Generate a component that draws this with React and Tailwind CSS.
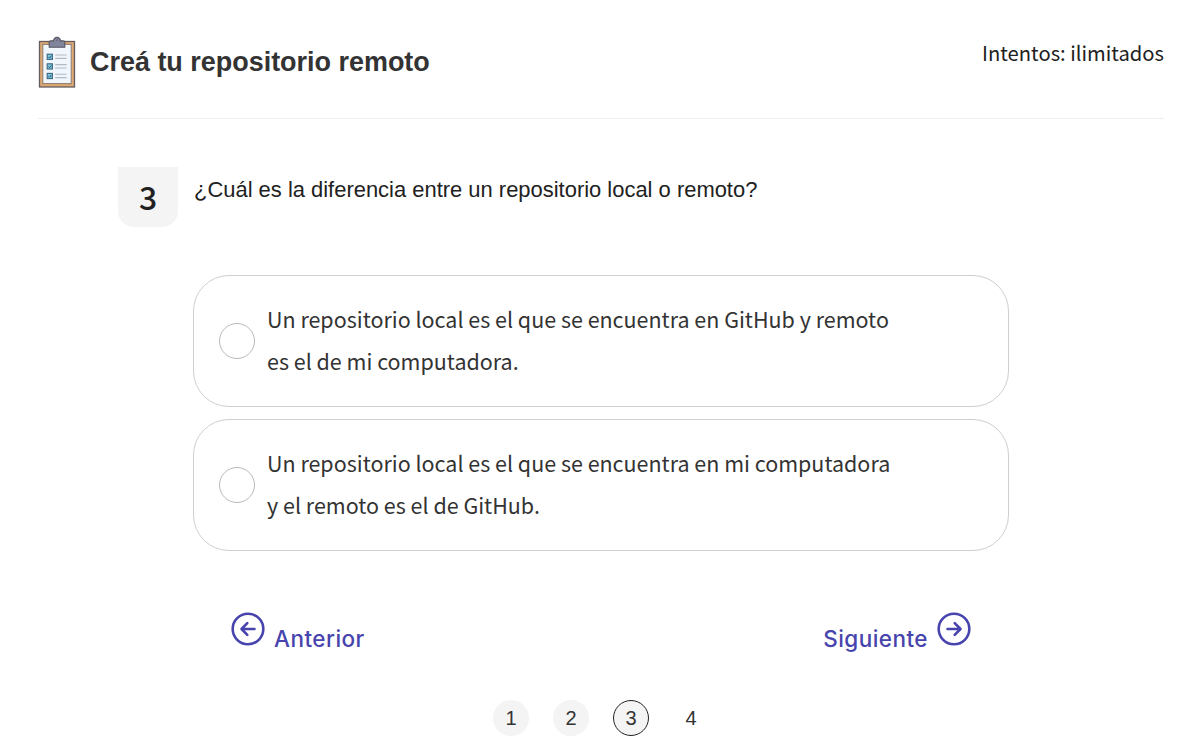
import React from "react";

const OPTIONS = [
  ["Un repositorio local es el que se encuentra en GitHub y remoto", "es el de mi computadora."],
  ["Un repositorio local es el que se encuentra en mi computadora", "y el remoto es el de GitHub."],
];

function ClipboardIcon() {
  return (
    <svg className="h-[52px] w-[38px] shrink-0" viewBox="0 0 38 52">
      <rect x="1.5" y="5.5" width="35" height="45.5" fill="#dda871" stroke="#655c62" strokeWidth="1.3" />
      <rect x="4.8" y="8.4" width="28.4" height="39.2" fill="#f1f6fc" stroke="#8a7b72" strokeWidth="1" />
      <path d="M11.2 11.2V6.5q0-1.6 1.6-1.6h2.8C15.4 2.6 17 1.4 19 1.4s3.6 1.2 3.4 3.5h2.8q1.6 0 1.6 1.6v4.7z" fill="#80859b" stroke="#565664" strokeWidth="1.1" />
      <circle cx="19" cy="4.2" r="1" fill="#6a6d80" />
      {[18.2, 27.8, 37.4].map((y) => (
        <g key={y}>
          <rect x="9.2" y={y} width="5.2" height="5.2" fill="#7cc7df" stroke="#3b657f" strokeWidth="1.1" />
          <path d={`M10.5 ${y + 2.7}l1.1 1.2 1.7-2.3`} fill="none" stroke="#294f6b" strokeWidth=".9" />
          <path d={`M17.2 ${y + 0.8}h11.5M17.2 ${y + 4.2}h11.5`} stroke="#b4bac2" strokeWidth="1.1" />
        </g>
      ))}
    </svg>
  );
}

function ArrowCircle({ right }) {
  return (
    <svg className="h-[34px] w-[34px] shrink-0" viewBox="0 0 34 34" fill="none" stroke="#4744ad" strokeLinecap="round" strokeLinejoin="round">
      <circle cx="17" cy="17" r="15.3" strokeWidth="2.6" />
      <path d={right ? "M10.5 17H22.8M17.7 11.2L23.5 17l-5.8 5.8" : "M23.5 17H11.2M16.3 11.2L10.5 17l5.8 5.8"} strokeWidth="2.6" />
    </svg>
  );
}

export default function App() {
  return (
    <main className="h-[750px] w-[1183px] overflow-hidden bg-white pt-9 pr-[19px] pl-[38px] font-['Noto_Sans_CJK_SC',sans-serif] text-[#212121]">
      <header className="flex h-[83px] items-start border-b border-[#eeeeee]">
        <ClipboardIcon />
        <h1 className="ml-[14px] pt-[6px] font-['Liberation_Sans',sans-serif] text-[26.95px] leading-10 font-bold whitespace-nowrap text-[#333]">
          Creá tu repositorio remoto
        </h1>
        <p className="ml-auto text-[20.2px] leading-[34px] whitespace-nowrap">Intentos: ilimitados</p>
      </header>
      <section className="mt-12 ml-20 flex h-[60px]">
        <div className="flex h-[60px] w-[60px] items-start justify-center rounded-b-2xl bg-[#f4f4f4] text-[32px] leading-[58px] font-medium">3</div>
        <p className="ml-4 pt-[7px] font-['Liberation_Sans',sans-serif] text-[21.95px] leading-8 whitespace-nowrap">
          ¿Cuál es la diferencia entre un repositorio local o remoto?
        </p>
      </section>
      <section className="mt-12 ml-[155px] flex w-[816px] flex-col gap-3">
        {OPTIONS.map((lines) => (
          <label key={lines[0]} className="flex h-[132px] items-center rounded-[36px] border border-[#cfcfcf] pl-[25px]">
            <span className="h-9 w-9 shrink-0 rounded-full border border-[#b9b9b9]" />
            <span className="mb-[3px] ml-3 text-[21.47px] leading-[42px] whitespace-nowrap text-[#333]">
              {lines.map((line) => <span key={line} className="block">{line}</span>)}
            </span>
          </label>
        ))}
      </section>
      <nav className="mt-[61px] ml-[193px] flex h-[45px] w-[740px] justify-between font-['Inter',sans-serif] text-[22.5px] leading-8 font-medium tracking-[0.45px] text-[#4744ad]">
        <a className="flex gap-[9px]"><ArrowCircle /><span className="pt-[11px]">Anterior</span></a>
        <a className="flex gap-[9px]"><span className="pt-[11px]">Siguiente</span><ArrowCircle right /></a>
      </nav>
      <nav className="mt-[43px] ml-[455px] flex gap-6 font-['Liberation_Sans',sans-serif] text-[20px] text-[#333]">
        <span className="flex h-9 w-9 items-center justify-center rounded-full bg-[#f4f4f4]">1</span>
        <span className="flex h-9 w-9 items-center justify-center rounded-full bg-[#f4f4f4]">2</span>
        <span className="flex h-9 w-9 items-center justify-center rounded-full border border-[#222] bg-[#f4f4f4]">3</span>
        <span className="flex h-9 w-9 items-center justify-center rounded-full">4</span>
      </nav>
    </main>
  );
}
